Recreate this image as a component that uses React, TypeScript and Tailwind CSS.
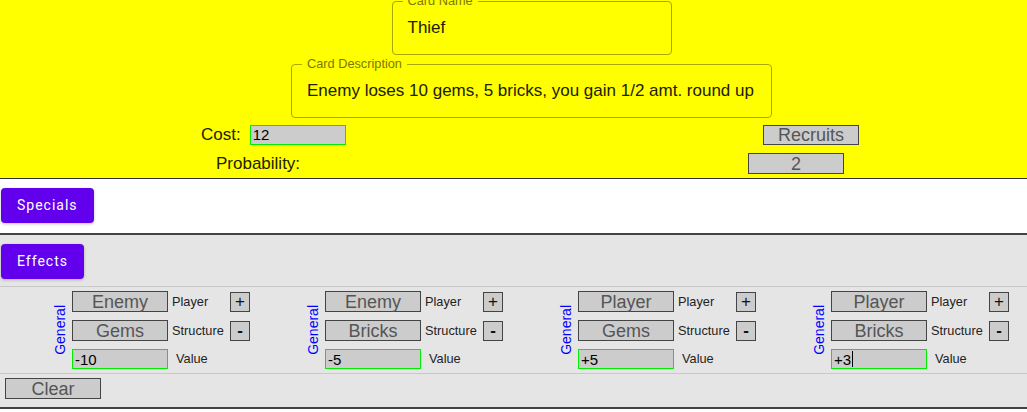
import React from "react";

interface Effect {
  target: string;
  kind: string;
  value: string;
  focused?: boolean;
}

const effects: Effect[] = [
  { target: "Enemy", kind: "Gems", value: "-10" },
  { target: "Enemy", kind: "Bricks", value: "-5" },
  { target: "Player", kind: "Gems", value: "+5" },
  { target: "Player", kind: "Bricks", value: "+3", focused: true },
];

const greyBox =
  "flex items-center justify-center border border-[#444444] bg-[#cccccc] text-[18px] leading-none text-[#555555]";
const valueBox =
  "flex items-center border border-[#00ee00] bg-[#cccccc] pl-[2px] text-[15px] leading-none text-black";
const purpleButton =
  "ml-[1px] mt-[9px] h-[35px] rounded-[4px] bg-[#6200ee] px-[16px] font-['Roboto',sans-serif] text-[14px] font-normal tracking-[1px] text-white shadow-[0_1px_3px_rgba(0,0,0,0.25)]";

function OutlinedField({ label, value, width }: { label: string; value: string; width: string }) {
  return (
    <fieldset className={`${width} rounded-[4px] border border-[#a8a800] pl-[10px] pr-[10px]`}>
      <legend className="px-[5px] text-[12.75px] leading-[12px] text-[#7a7a00]">{label}</legend>
      <div className="flex h-[47px] items-center pb-[5px] pl-[5px] text-[17px] text-[#212100]">
        {value}
      </div>
    </fieldset>
  );
}

function EffectColumn({ effect }: { effect: Effect }) {
  return (
    <div className="flex items-center pl-[44px]">
      <span className="rotate-180 text-[14px] leading-[16px] text-[#0000ff] [writing-mode:vertical-rl]">
        General
      </span>
      <div className="ml-[4px] grid grid-cols-[96px_54px_20px] gap-x-[4px] gap-y-[8px]">
        <div className={`${greyBox} h-[21px]`}>{effect.target}</div>
        <div className="flex h-[21px] items-center text-[12.75px] text-[#222222]">Player</div>
        <div className="flex h-[21px] items-center">
          <div className="flex h-[20px] w-[20px] items-center justify-center border border-[#444444] bg-[#cccccc] text-[17px] leading-none text-[#111111]">
            +
          </div>
        </div>

        <div className={`${greyBox} h-[21px]`}>{effect.kind}</div>
        <div className="flex h-[21px] items-center text-[12.75px] text-[#222222]">Structure</div>
        <div className="flex h-[21px] items-center">
          <div className="flex h-[20px] w-[20px] items-center justify-center border border-[#444444] bg-[#cccccc] text-[17px] font-bold leading-none text-[#111111]">
            -
          </div>
        </div>

        <div className={`${valueBox} h-[20px]`}>
          {effect.value}
          {effect.focused && <span className="ml-px h-[16px] w-px bg-black" />}
        </div>
        <div className="col-span-2 flex h-[20px] items-center pl-[4px] text-[12.75px] text-[#222222]">
          Value
        </div>
      </div>
    </div>
  );
}

export default function App() {
  return (
    <div className="min-h-[412px] w-[1027px] overflow-hidden bg-white font-['Liberation_Sans',Arial,sans-serif]">
      {/* Card header */}
      <div className="h-[179px] border-b border-[#333333] bg-[#ffff00]">
        <div className="flex flex-col items-center pl-[36px]">
          <div className="-mt-[5px]">
            <OutlinedField label="Card Name" value="Thief" width="w-[280px]" />
          </div>
          <div className="mt-[3px]">
            <OutlinedField
              label="Card Description"
              value="Enemy loses 10 gems, 5 bricks, you gain 1/2 amt. round up"
              width="w-[481px]"
            />
          </div>
        </div>

        <div className="mt-[6px] flex h-[21px] items-center text-[17px] text-[#212100]">
          <div className="flex w-[748px] items-center pl-[201px]">
            <span>Cost:</span>
            <div className={`${valueBox} ml-[9px] h-[20px] w-[96px]`}>12</div>
          </div>
          <div className={`${greyBox} ml-[15px] h-[20px] w-[96px]`}>Recruits</div>
        </div>
        <div className="mt-[8px] flex h-[21px] items-center text-[17px] text-[#212100]">
          <div className="w-[748px] pl-[216px]">Probability:</div>
          <div className={`${greyBox} h-[21px] w-[96px]`}>2</div>
        </div>
      </div>

      {/* Specials */}
      <div className="h-[56px] border-b-2 border-[#444444] bg-white">
        <button className={purpleButton}>Specials</button>
      </div>

      {/* Effects */}
      <div className="border-b-2 border-[#444444] bg-[#e5e5e5] pb-[8px]">
        <button className={purpleButton}>Effects</button>
        <div className="mt-[7px] grid grid-cols-4 border-y border-[#c8c8c8] pb-[4px] pl-[8px] pr-[7px] pt-[4px]">
          {effects.map((effect, i) => (
            <EffectColumn key={i} effect={effect} />
          ))}
        </div>
        <div className={`${greyBox} ml-[5px] mt-[4px] h-[21px] w-[96px]`}>Clear</div>
      </div>
    </div>
  );
}
